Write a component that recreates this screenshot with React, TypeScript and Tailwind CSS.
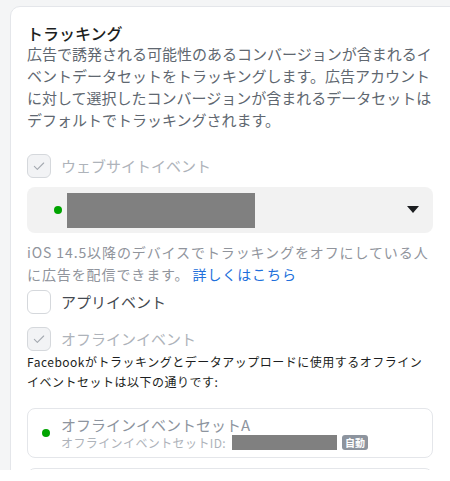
import React from 'react';

const font = { fontFamily: '"Noto Sans CJK JP", "Noto Sans", sans-serif' };

const CheckMark = () => (
  <svg viewBox="0 0 24 24" className="w-[16px] h-[16px]" fill="none">
    <path d="M5 12.5l4.5 4.5L19 7.5" stroke="#a4a9b0" strokeWidth="1.6" strokeLinecap="round" strokeLinejoin="round" />
  </svg>
);

const Checkbox: React.FC<{ checked?: boolean; disabled?: boolean; label: string }> = ({ checked, disabled, label }) => (
  <div className="flex items-center h-[24px]">
    <div
      className={
        'w-[24px] h-[24px] rounded-[6px] border flex items-center justify-center ' +
        (disabled ? 'bg-[#f2f3f5] border-[#d5d8dc]' : 'bg-white border-[#d5d8dc]')
      }
    >
      {checked && <CheckMark />}
    </div>
    <span className={'ml-[10px] text-[15px] leading-[20px] ' + (disabled ? 'text-[#aeb3ba]' : 'text-[#444950]')}>
      {label}
    </span>
  </div>
);

export default function App() {
  return (
    <div className="w-[450px] h-[481px] bg-white overflow-hidden" style={font}>
      <div className="h-[470px] bg-[#f4f5f6] pl-[10px] pt-[6px] overflow-hidden">
        <div className="w-[460px] h-[480px] bg-white border border-[#e4e6ea] rounded-l-[10px] pl-[16px] pt-[16px]">
          <div className="w-[406px]">
            {/* Header */}
            <h2 className="text-[16px] leading-[20px] font-medium text-[#1c1e21]">トラッキング</h2>
            <p className="text-[15px] leading-[22px] text-[#606770]">
              広告で誘発される可能性のあるコンバージョンが含まれるイベントデータセットをトラッキングします。広告アカウントに対して選択したコンバージョンが含まれるデータセットはデフォルトでトラッキングされます。
            </p>

            {/* Website events */}
            <div className="mt-[23px]">
              <Checkbox checked disabled label="ウェブサイトイベント" />
            </div>
            <div className="mt-[9px] h-[46px] rounded-[8px] bg-[#f2f2f2] flex items-center pl-[27px] pr-[14px]">
              <span className="w-[8px] h-[8px] rounded-full bg-[#00a400]" />
              <span className="ml-[5px] w-[188px] h-[35px] bg-[#808080]" />
              <svg viewBox="0 0 12 8" className="ml-auto w-[12px] h-[8px]">
                <path d="M0 0h12L6 7z" fill="#1c1e21" />
              </svg>
            </div>
            <div className="mt-[8px] text-[14px] leading-[22px] tracking-[0.9px] text-[#90949c]">
              <div>iOS 14.5以降のデバイスでトラッキングをオフにしている人</div>
              <div className="flex">
                <span>に広告を配信できます。</span>
                <span className="ml-[3px] text-[#216fdb]">詳しくはこちら</span>
              </div>
            </div>

            {/* App events */}
            <div className="mt-[5px]">
              <Checkbox label="アプリイベント" />
            </div>

            {/* Offline events */}
            <div className="mt-[13px]">
              <Checkbox checked disabled label="オフラインイベント" />
            </div>
            <p className="mt-[1px] text-[12px] leading-[20px] tracking-[0.5px] text-[#1c1e21]">
              Facebookがトラッキングとデータアップロードに使用するオフラインイベントセットは以下の通りです:
            </p>

            <div className="mt-[16px] h-[50px] rounded-[8px] border border-[#e4e6ea] flex items-center pl-[14px]">
              <span className="w-[8px] h-[8px] rounded-full bg-[#00a400]" />
              <div className="ml-[11px] flex flex-col">
                <span className="text-[15px] leading-[19px] text-[#8d949e]">オフラインイベントセットA</span>
                <div className="flex items-center h-[17px]">
                  <span className="text-[12px] leading-[16px] tracking-[0.4px] text-[#aeb3ba]">オフラインイベントセットID:</span>
                  <span className="ml-[6px] w-[105px] h-[15px] bg-[#808080]" />
                  <span className="ml-[5px] h-[15px] px-[3px] rounded-[3px] bg-[#8d949e] text-white text-[10px] leading-[15px] font-bold">
                    自動
                  </span>
                </div>
              </div>
            </div>
            <div className="mt-[10px] h-[50px] rounded-[8px] border border-[#e4e6ea]" />
          </div>
        </div>
      </div>
    </div>
  );
}
